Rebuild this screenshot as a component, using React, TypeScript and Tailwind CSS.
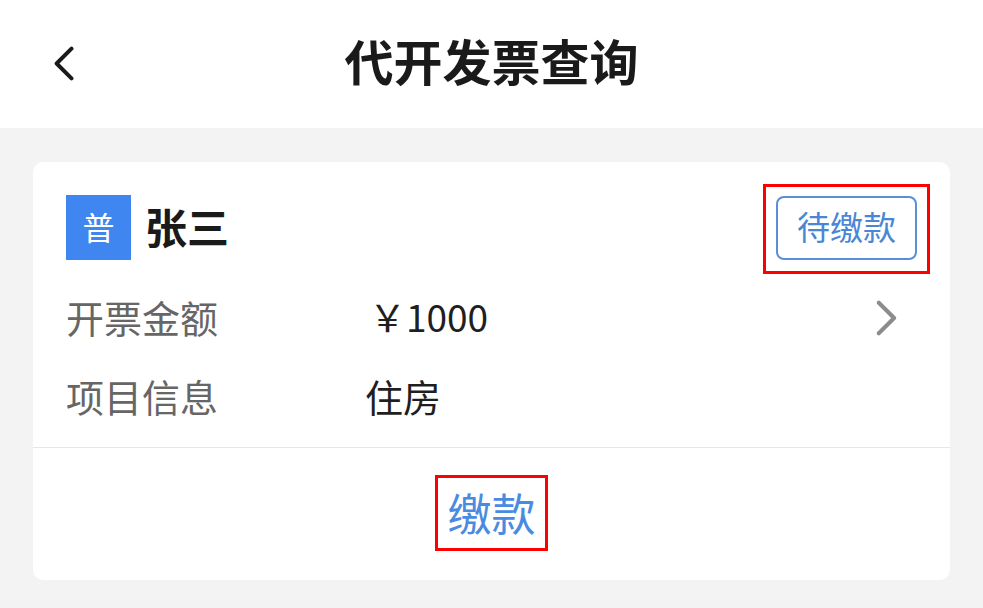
const font = { fontFamily: '"Noto Sans CJK SC", "Noto Sans", sans-serif' };

const Chevron = ({ dir, className }: { dir: "left" | "right"; className?: string }) => (
  <svg viewBox="0 0 24 40" className={className} fill="none" stroke="currentColor" strokeWidth={4.5} strokeLinecap="round" strokeLinejoin="round">
    {dir === "left" ? <path d="M20 3 L3 20 L20 37" /> : <path d="M4 3 L21 20 L4 37" />}
  </svg>
);

export default function App() {
  return (
    <div className="w-[983px] h-[608px] bg-[#f3f3f3] overflow-hidden" style={font}>
      {/* header */}
      <div className="relative h-[128px] bg-white flex items-center justify-center">
        <button className="absolute left-[54px] top-[45px] w-[22px] h-[37px] text-[#1a1a1a]">
          <Chevron dir="left" className="w-[21px] h-[37px]" />
        </button>
        <h1 className="text-[49px] font-bold text-[#1a1a1a] leading-none -mt-[10px]">代开发票查询</h1>
      </div>

      <div className="px-[33px] pt-[34px]">
        <div className="bg-white rounded-[10px]">
          <div className="px-[33px] pt-[33px] pb-[12px]">
            {/* name row */}
            <div className="flex items-center justify-between h-[65px]">
              <div className="flex items-center gap-[14px]">
                <div className="w-[65px] h-[65px] bg-[#3f86f0] flex items-center justify-center text-white text-[32px] leading-none">
                  <span className="-mt-[3px]">普</span>
                </div>
                <span className="text-[42px] font-bold text-[#1a1a1a] leading-none -mt-[3px]">张三</span>
              </div>
              <div className="relative">
                <div className="h-[64px] w-[141px] border-2 border-[#5a8fd8] rounded-[8px] flex items-center justify-center text-[33px] text-[#4a86d6] leading-none">
                  <span className="-mt-[3px]">待缴款</span>
                </div>
                <div className="absolute -left-[13px] -right-[13px] -top-[12px] -bottom-[14px] border-[3px] border-[#ff0000]" />
              </div>
            </div>

            {/* info rows */}
            <div className="mt-[17px]">
              <div className="flex items-center h-[79px]">
                <span className="w-[299px] text-[38px] text-[#666666] leading-none">开票金额</span>
                <span className="flex-1 text-[37px] text-[#1f1f1f] leading-none pl-[4px]">￥1000</span>
                <Chevron dir="right" className="w-[22px] h-[36px] text-[#8c8c8c] mr-[20px] mt-[3px]" />
              </div>
              <div className="flex items-center h-[79px]">
                <span className="w-[299px] text-[38px] text-[#666666] leading-none">项目信息</span>
                <span className="flex-1 text-[38px] text-[#1f1f1f] leading-none">住房</span>
              </div>
            </div>
          </div>

          <div className="h-px bg-[#e6e6e6]" />

          {/* action */}
          <div className="h-[132px] flex items-center justify-center">
            <div className="relative">
              <span className="block text-[44px] text-[#4a8be2] leading-none -mt-[4px]">缴款</span>
              <div className="absolute -left-[13px] -right-[12px] -top-[19px] -bottom-[17px] border-[3px] border-[#ff0000]" />
            </div>
          </div>
        </div>
      </div>
    </div>
  );
}
